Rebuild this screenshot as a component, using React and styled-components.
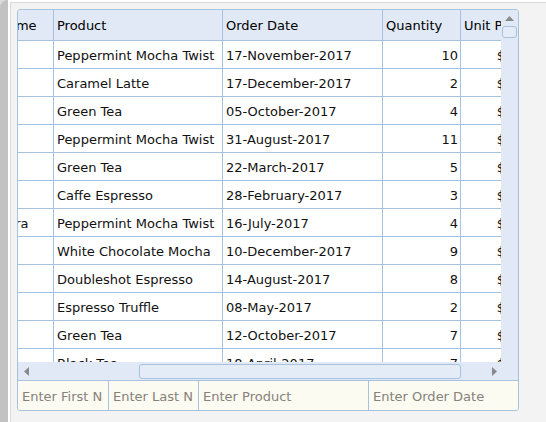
import React from 'react';
import styled, { createGlobalStyle } from 'styled-components';

const GlobalStyle = createGlobalStyle`
  html, body { margin: 0; padding: 0; background: #ffffff; }
  body {
    font-family: "DejaVu Sans", Verdana, sans-serif;
    font-size: 13px;
    width: 546px;
    height: 422px;
    overflow: hidden;
  }
  * { box-sizing: border-box; }
`;

const BORDER = '#a6c2de';
const HEAD_BG = '#e0e9f5';

const COLS = [
  { key: 'first', title: 'First Name', width: 91 },
  { key: 'last', title: 'Last Name', width: 90 },
  { key: 'product', title: 'Product', width: 169 },
  { key: 'date', title: 'Order Date', width: 160 },
  { key: 'qty', title: 'Quantity', width: 78, align: 'right' },
  { key: 'price', title: 'Unit Price', width: 76, align: 'right' },
  { key: 'total', title: 'Total', width: 90, align: 'right' },
];

const TEMPLATE = COLS.map((c) => `${c.width}px`).join(' ');

const ROWS = [
  { first: 'Nancy', last: 'Fuller', product: 'Peppermint Mocha Twist', date: '17-November-2017', qty: 10, price: 4 },
  { first: 'Andrew', last: 'Burke', product: 'Caramel Latte', date: '17-December-2017', qty: 2, price: 3.8 },
  { first: 'Janet', last: 'Bein', product: 'Green Tea', date: '05-October-2017', qty: 4, price: 1.5 },
  { first: 'Margaret', last: 'Ohno', product: 'Peppermint Mocha Twist', date: '31-August-2017', qty: 11, price: 4 },
  { first: 'Steven', last: 'Rossi', product: 'Green Tea', date: '22-March-2017', qty: 5, price: 1.5 },
  { first: 'Michael', last: 'Bjorn', product: 'Caffe Espresso', date: '28-February-2017', qty: 3, price: 3 },
  { first: 'Robert', last: 'Saavedra', product: 'Peppermint Mocha Twist', date: '16-July-2017', qty: 4, price: 4 },
  { first: 'Laura', last: 'Fuller', product: 'White Chocolate Mocha', date: '10-December-2017', qty: 9, price: 3.6 },
  { first: 'Anne', last: 'Wilson', product: 'Doubleshot Espresso', date: '14-August-2017', qty: 8, price: 3 },
  { first: 'Antoni', last: 'Bein', product: 'Espresso Truffle', date: '08-May-2017', qty: 2, price: 1.75 },
  { first: 'Mayumi', last: 'Ohno', product: 'Green Tea', date: '12-October-2017', qty: 7, price: 1.5 },
  { first: 'Ian', last: 'Devling', product: 'Black Tea', date: '18-April-2017', qty: 7, price: 2.25 },
  { first: 'Peter', last: 'Burke', product: 'Caramel Latte', date: '02-June-2017', qty: 6, price: 3.8 },
];

const FILTERS = [
  { placeholder: 'Enter First Name', width: '91px' },
  { placeholder: 'Enter Last Name', width: '90px' },
  { placeholder: 'Enter Product', width: '170px' },
  { placeholder: 'Enter Order Date', width: '1fr' },
];

const Page = styled.div`
  display: flex;
  width: 546px;
  height: 422px;
  overflow: hidden;
`;

const OuterScroll = styled.div`
  flex: none;
  width: 8px;
  display: flex;
  background: #dcdcdc;
`;

const OuterThumb = styled.div`
  flex: 1;
  background: #c2c2c2;
  border-top-left-radius: 12px;
`;

const Panel = styled.div`
  flex: 1;
  margin: 2px 0 0 2px;
  padding: 6px 0 0 6px;
  border-top: 1px solid #d9d9d9;
  border-left: 1px solid #d9d9d9;
  background: #f3f3f4;
`;

const Grid = styled.div`
  width: 502px;
  height: 402px;
  display: flex;
  flex-direction: column;
  border: 1px solid ${BORDER};
  border-radius: 3px;
  background: #ffffff;
  overflow: hidden;
`;

const TopArea = styled.div`
  display: flex;
  height: 352px;
  flex: none;
`;

const Viewport = styled.div`
  flex: 1;
  overflow: hidden;
`;

const Content = styled.div`
  width: max-content;
  transform: translateX(${(p) => -p.$scroll}px);
`;

const HeaderRow = styled.div`
  display: grid;
  grid-template-columns: ${TEMPLATE};
  height: 31px;
  background: ${HEAD_BG};
`;

const HeaderCell = styled.div`
  display: flex;
  align-items: center;
  padding: 0 2px 0 3px;
  border-right: 1px solid ${BORDER};
  border-bottom: 1px solid ${BORDER};
  color: #000000;
  white-space: nowrap;
  overflow: hidden;
`;

const Row = styled.div`
  display: grid;
  grid-template-columns: ${TEMPLATE};
  height: 28px;
  background: #ffffff;
`;

const Cell = styled.div`
  display: flex;
  align-items: center;
  justify-content: ${(p) => (p.$align === 'right' ? 'flex-end' : 'flex-start')};
  padding: 1px 2px 0 3px;
  border-right: 1px solid ${BORDER};
  border-bottom: 1px solid ${BORDER};
  color: #111111;
  white-space: nowrap;
  overflow: hidden;
`;

const VScroll = styled.div`
  flex: none;
  width: 17px;
  display: flex;
  flex-direction: column;
  align-items: center;
  background: ${HEAD_BG};
`;

const ArrowBox = styled.div`
  flex: none;
  display: flex;
  align-items: center;
  justify-content: center;
  width: ${(p) => p.$w}px;
  height: ${(p) => p.$h}px;
  padding-left: ${(p) => p.$shift || 0}px;
`;

const VThumb = styled.div`
  flex: none;
  width: 15px;
  height: 12px;
  border: 1px solid ${BORDER};
  border-radius: 3px;
  background: #e4ecf7;
`;

const HScroll = styled.div`
  flex: none;
  height: 18px;
  display: flex;
  align-items: flex-start;
  background: ${HEAD_BG};
`;

const HTrack = styled.div`
  flex: 1;
  height: 18px;
  padding-top: 2px;
`;

const HThumb = styled.div`
  height: 15px;
  border: 1px solid ${BORDER};
  border-radius: 3px;
  background: #e4ecf7;
`;

const Corner = styled.div`
  flex: none;
  width: 17px;
`;

const FilterRow = styled.div`
  flex: none;
  display: grid;
  grid-template-columns: ${FILTERS.map((f) => f.width).join(' ')};
  height: 30px;
  border-top: 1px solid ${BORDER};
  background: #fbfbf2;
`;

const FilterCell = styled.div`
  display: flex;
  align-items: center;
  padding: 1px 5px 0 4px;
  border-right: 1px solid ${BORDER};
  overflow: hidden;
  &:last-child { border-right: none; }
`;

const FilterInput = styled.input`
  width: 100%;
  min-width: 0;
  border: none;
  outline: none;
  background: transparent;
  padding: 0;
  margin: 0;
  font-family: "DejaVu Sans", Verdana, sans-serif;
  font-size: 13px;
  color: #000000;
  &::placeholder { color: #87817a; opacity: 1; }
`;

const Tri = ({ dir }) => {
  const pts = {
    up: '0,5 4.5,0 9,5',
    left: '5,0 5,9 0,4.5',
    right: '0,0 0,9 5,4.5',
  }[dir];
  const w = dir === 'up' ? 9 : 5;
  const h = dir === 'up' ? 5 : 9;
  return (
    <svg width={w} height={h} viewBox={`0 0 ${w} ${h}`}>
      <polygon points={pts} fill="#8a8a8a" />
    </svg>
  );
};

const fmt = (r, key) => {
  if (key === 'price') return `$${r.price.toFixed(2)}`;
  if (key === 'total') return `$${(r.price * r.qty).toFixed(2)}`;
  return r[key];
};

export default function App() {
  const scrollLeft = 145;
  const thumbLeft = 104;
  const thumbWidth = 322;
  return (
    <>
      <GlobalStyle />
      <Page>
        <OuterScroll>
          <OuterThumb />
        </OuterScroll>
        <Panel>
          <Grid>
            <TopArea>
              <Viewport>
                <Content $scroll={scrollLeft}>
                  <HeaderRow>
                    {COLS.map((c) => (
                      <HeaderCell key={c.key}>{c.title}</HeaderCell>
                    ))}
                  </HeaderRow>
                  {ROWS.map((r, i) => (
                    <Row key={i}>
                      {COLS.map((c) => (
                        <Cell key={c.key} $align={c.align}>
                          {fmt(r, c.key)}
                        </Cell>
                      ))}
                    </Row>
                  ))}
                </Content>
              </Viewport>
              <VScroll>
                <ArrowBox $w={17} $h={16}>
                  <Tri dir="up" />
                </ArrowBox>
                <VThumb />
              </VScroll>
            </TopArea>
            <HScroll>
              <ArrowBox $w={17} $h={18}>
                <Tri dir="left" />
              </ArrowBox>
              <HTrack>
                <HThumb style={{ marginLeft: thumbLeft, width: thumbWidth }} />
              </HTrack>
              <ArrowBox $w={17} $h={18} $shift={4}>
                <Tri dir="right" />
              </ArrowBox>
              <Corner />
            </HScroll>
            <FilterRow>
              {FILTERS.map((f) => (
                <FilterCell key={f.placeholder}>
                  <FilterInput placeholder={f.placeholder} />
                </FilterCell>
              ))}
            </FilterRow>
          </Grid>
        </Panel>
      </Page>
    </>
  );
}
